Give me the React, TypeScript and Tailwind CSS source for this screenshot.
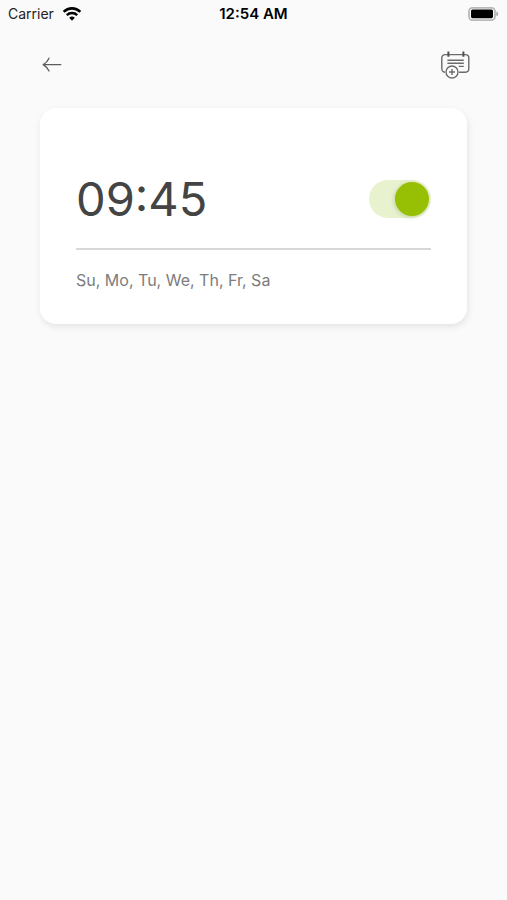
import React, { useState } from 'react';

const DAYS = ['Su', 'Mo', 'Tu', 'We', 'Th', 'Fr', 'Sa'];

function WifiIcon() {
  return (
    <svg width="20" height="16" viewBox="0 0 20 16" fill="none" aria-hidden="true">
      <path d="M1.7 5.8a11.8 11.8 0 0 1 16.6 0" stroke="#000" strokeWidth="2.6" />
      <path d="M4.8 9.2a7.4 7.4 0 0 1 10.4 0" stroke="#000" strokeWidth="2.4" />
      <path d="M10 14.8 7.2 11.8a4 4 0 0 1 5.6 0Z" fill="#000" />
    </svg>
  );
}

function BatteryIcon() {
  return (
    <svg width="31" height="14" viewBox="0 0 31 14" fill="none" aria-hidden="true">
      <rect x="1" y="0.8" width="26" height="12.4" rx="3.6" stroke="#b9b9b9" strokeWidth="1.8" />
      <rect x="3" y="2.4" width="22" height="8.8" rx="1.6" fill="#000" />
      <path d="M28.4 4.4c2.4.8 2.4 4 0 4.8Z" fill="#a6a6a6" />
    </svg>
  );
}

function BackIcon() {
  return (
    <svg width="20" height="16" viewBox="0 0 20 16" fill="none" stroke="#5c5c5c" strokeWidth="1.3" strokeLinecap="round" strokeLinejoin="round" aria-hidden="true">
      <path d="M18.8 7.6H1.2M7 1.2Q5.2 5.4 1.2 7.6Q5.2 10 7 14" />
    </svg>
  );
}

function AddScheduleIcon() {
  return (
    <svg width="30" height="28" viewBox="0 0 30 28" fill="none" stroke="#6b6b6b" strokeWidth="1.4" aria-hidden="true">
      <rect x="1.8" y="3.6" width="27" height="17.6" rx="3.4" />
      <path d="M8.4 0.6v5.2M23.4 0.6v5.2" stroke="#505050" strokeWidth="2" />
      <path d="M7.4 9.2h16.4M7.4 12.2h16.4M18.8 15.4h5" />
      <circle cx="12" cy="21" r="7.2" fill="#fafafa" stroke="none" />
      <circle cx="12" cy="21" r="6" />
      <path d="M12 18v6M9 21h6" />
    </svg>
  );
}

export default function App() {
  const [enabled, setEnabled] = useState(true);

  return (
    <div className="min-h-screen bg-[#fafafa] font-['Inter',sans-serif]">
      {/* Status bar */}
      <div className="grid grid-cols-3 items-center h-7 px-2 text-sm text-[#222]">
        <div className="flex items-center gap-2">
          <span>Carrier</span>
          <WifiIcon />
        </div>
        <span className="text-center text-[15px] font-semibold text-black">12:54 AM</span>
        <div className="flex justify-end">
          <BatteryIcon />
        </div>
      </div>

      {/* Header */}
      <header className="flex items-center justify-between h-20 px-9 pb-1.5">
        <button type="button" aria-label="Back" className="flex items-center justify-center w-8 h-8">
          <BackIcon />
        </button>
        <button type="button" aria-label="Add schedule" className="flex items-center justify-center w-8 h-8">
          <AddScheduleIcon />
        </button>
      </header>

      <main className="px-10">
        <section className="rounded-2xl bg-white px-9 pt-16 pb-8 shadow-[1px_3px_7px_rgba(0,0,0,0.09)]">
          <div className="flex items-center justify-between h-14 pb-0.5">
            <label htmlFor="alarm" className="text-[47px] text-[#444]">09:45</label>
            <span className="relative flex">
              <input
                id="alarm"
                type="checkbox"
                role="switch"
                checked={enabled}
                onChange={e => setEnabled(e.target.checked)}
                className="peer appearance-none w-[62px] h-[38px] rounded-full bg-gray-200 checked:bg-[#e9f2cf] cursor-pointer transition-colors"
              />
              <span className="pointer-events-none absolute top-[2px] left-[2px] w-[34px] h-[34px] rounded-full bg-gray-400 shadow-[-1px_1px_4px_rgba(80,110,0,0.25)] transition-transform peer-checked:translate-x-6 peer-checked:bg-[#97bf04]" />
            </span>
          </div>
          <hr className="mt-5 border-t-2 border-[#d8d8d8]" />
          <p className="mt-[18px] text-base text-[#7c7c7c]">{DAYS.join(', ')}</p>
        </section>
      </main>
    </div>
  );
}
